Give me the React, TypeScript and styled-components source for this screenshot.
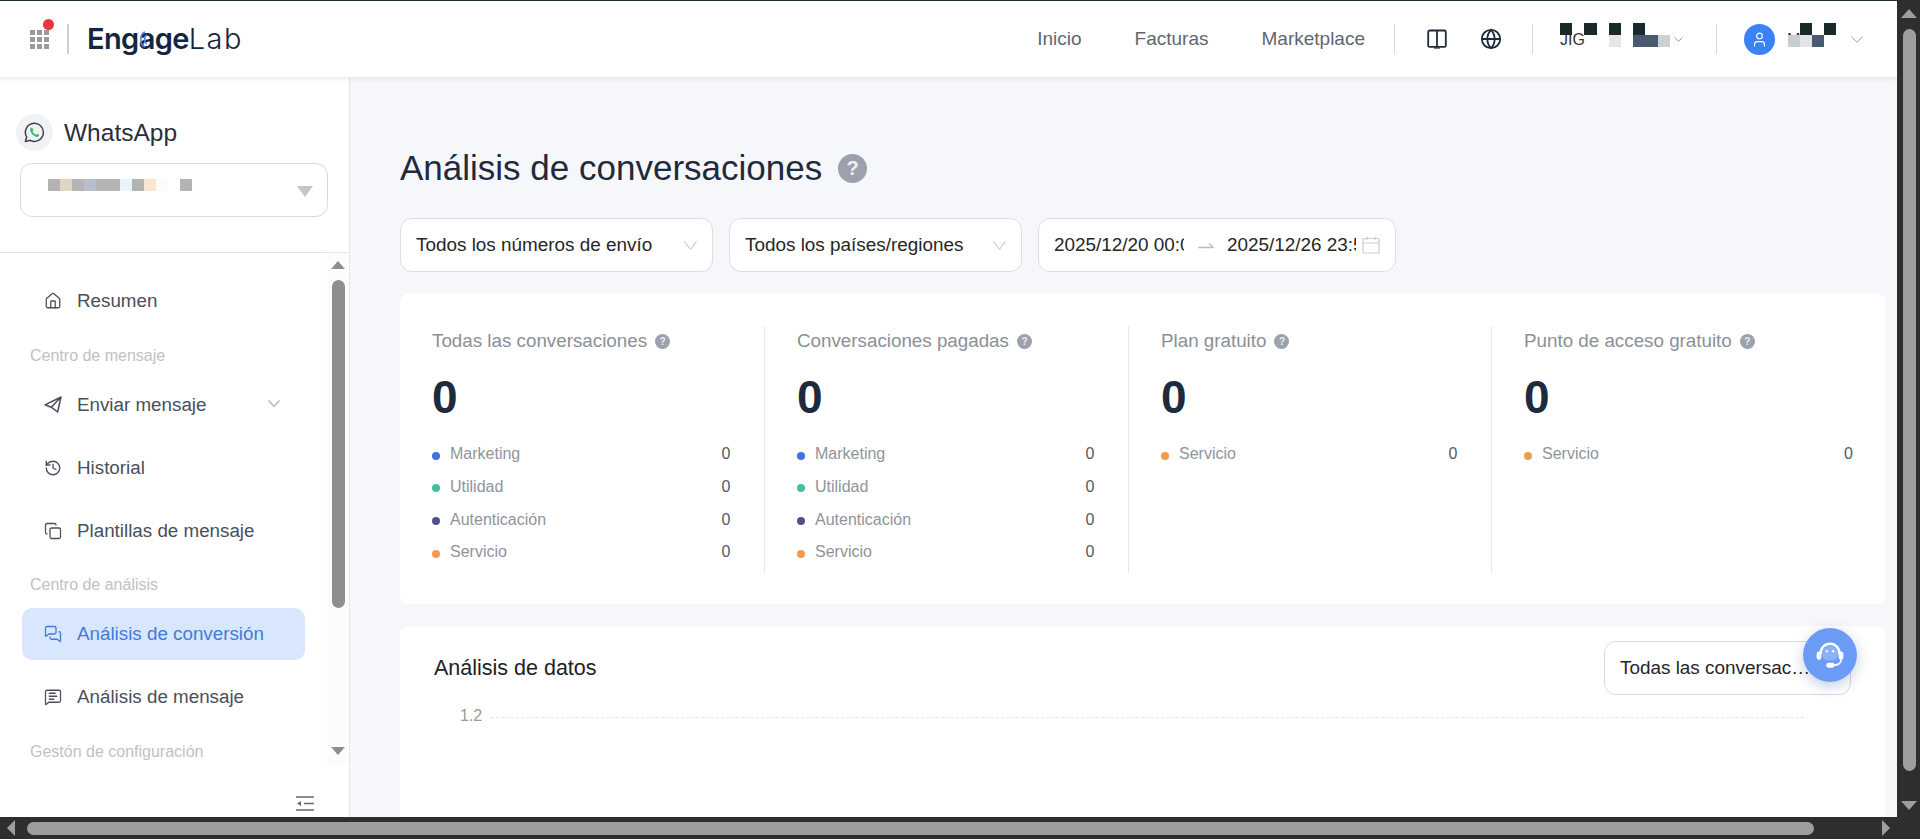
import React from 'react';
import styled, { createGlobalStyle } from 'styled-components';
import { Globe, History, House, Copy, MessagesSquare, MessageSquareText, User } from 'lucide-react';

const GlobalStyle = createGlobalStyle`
  html, body {
    margin: 0;
    height: 100%;
    overflow: hidden;
    font-family: "Liberation Sans", Arial, sans-serif;
    background: #f5f7fa;
  }
  * {
    box-sizing: border-box;
  }
`;

const Screen = styled.div`
  width: 1920px;
  height: 839px;
  display: grid;
  grid-template-columns: 1897px 23px;
  grid-template-rows: 816px 22px;
  overflow: hidden;
  position: relative;
  border-top: 1px solid #1f2f2c;
`;

const Page = styled.div`
  display: flex;
  flex-direction: column;
  height: 816px;
  overflow: hidden;
`;

const TopBar = styled.header`
  height: 76px;
  flex: none;
  display: flex;
  align-items: center;
  padding: 0 34px 0 30px;
  background: #fff;
  box-shadow: 0 1px 6px rgba(30, 40, 60, 0.12);
  position: relative;
  z-index: 2;
`;

const AppGrid = styled.div`
  position: relative;
  display: grid;
  grid-template-columns: repeat(3, 5px);
  grid-auto-rows: 5px;
  gap: 2px;
  margin-top: 1px;
`;

const AppCell = styled.span`
  background: #9b9b9b;
`;

const RedDot = styled.span`
  position: absolute;
  top: -11px;
  right: -5px;
  width: 11px;
  height: 11px;
  border-radius: 50%;
  background: #f0333a;
`;

const LogoDivider = styled.span`
  width: 2px;
  height: 30px;
  margin: 0 18px 0 18px;
  background: #cfcfcf;
`;

const Logo = styled.div`
  position: relative;
  font-family: Inter, sans-serif;
  font-size: 29px;
  letter-spacing: -0.6px;
  color: #12263f;
  display: flex;
  line-height: 30px;
`;

const LogoStrong = styled.span`
  font-weight: 600;
`;

const LogoLight = styled.span`
  font-weight: 300;
  letter-spacing: 1.4px;
`;

const LogoArc = styled.svg`
  position: absolute;
  left: 49px;
  top: 6px;
`;

const Spacer = styled.div`
  flex: 1;
`;

const TopLink = styled.a<{ $gap?: number }>`
  font-size: 19px;
  color: #5f6670;
  margin-right: ${(p) => p.$gap ?? 53}px;
`;

const TopDivider = styled.span<{ $left?: number; $right: number }>`
  width: 1px;
  height: 30px;
  background: #d9dbde;
  margin-left: ${(p) => p.$left ?? 0}px;
  margin-right: ${(p) => p.$right}px;
`;

const TopIcon = styled.span<{ $right: number }>`
  display: flex;
  color: #1e2b3f;
  margin-right: ${(p) => p.$right}px;
`;

const AccountBox = styled.div<{ $width: number }>`
  position: relative;
  width: ${(p) => p.$width}px;
  height: 24px;
  display: flex;
  align-items: center;
  justify-content: flex-end;
  font-size: 16px;
  color: #333;
`;

const AccountText = styled.span`
  position: absolute;
  left: 0;
  top: 4px;
`;

const AccountChevron = styled.span<{ $c: string }>`
  display: flex;
  color: ${(p) => p.$c};
`;

const Mosaic = styled.div<{ $cols: number; $cell: number }>`
  position: absolute;
  display: grid;
  grid-template-columns: repeat(${(p) => p.$cols}, ${(p) => p.$cell}px);
  grid-auto-rows: 12px;
`;

const AccountMosaic = styled(Mosaic)`
  left: 0;
  top: -4px;
`;

const NameMosaic = styled(Mosaic)`
  left: 1px;
  top: -4px;
`;

const Tile = styled.span<{ $c?: string }>`
  background: ${(p) => p.$c || 'transparent'};
`;

const Avatar = styled.span`
  width: 31px;
  height: 31px;
  border-radius: 50%;
  background: #3b82f6;
  display: flex;
  align-items: center;
  justify-content: center;
  color: #fff;
  margin-right: 12px;
`;

const Columns = styled.div`
  flex: 1;
  display: flex;
  min-height: 0;
`;

const Sidebar = styled.aside`
  width: 350px;
  flex: none;
  display: flex;
  flex-direction: column;
  background: #fff;
  border-right: 1px solid #e6e8eb;
`;

const Brand = styled.div`
  height: 176px;
  flex: none;
  padding: 37px 22px 0 16px;
  border-bottom: 1px solid #e3e4e6;
  margin-right: -1px;
`;

const BrandRow = styled.div`
  display: flex;
  align-items: center;
  gap: 11px;
  font-size: 24.5px;
  color: #2a2f3c;
`;

const BrandIcon = styled.span`
  width: 37px;
  height: 37px;
  border-radius: 50%;
  background: #f1f2f4;
  display: flex;
  align-items: center;
  justify-content: center;
`;

const AppSelect = styled.div`
  position: relative;
  height: 54px;
  margin: 12px 0 0 4px;
  border: 1px solid #dadada;
  border-radius: 12px;
`;

const AppMosaic = styled(Mosaic)`
  left: 27px;
  top: 15px;
`;

const AppCaret = styled.span`
  position: absolute;
  right: 14px;
  top: 22px;
  width: 0;
  height: 0;
  border-left: 8px solid transparent;
  border-right: 8px solid transparent;
  border-top: 11px solid #c6c6c6;
`;

const NavArea = styled.div`
  height: 512px;
  flex: none;
  display: flex;
  justify-content: space-between;
  overflow: hidden;
`;

const NavList = styled.nav`
  width: 283px;
  margin-left: 22px;
  padding-top: 22px;
`;

const NavItem = styled.div<{ $active?: boolean }>`
  height: 52px;
  margin-bottom: 11px;
  display: flex;
  align-items: center;
  gap: 15px;
  padding-left: 22px;
  border-radius: 10px;
  font-size: 18.8px;
  color: ${(p) => (p.$active ? '#3f7bdc' : '#4a4f5a')};
  background: ${(p) => (p.$active ? '#d8e7fd' : 'transparent')};
  svg {
    flex: none;
  }
`;

const NavChevron = styled.span`
  display: flex;
  color: #bbbdc1;
  margin: -4px 0 0 auto;
  padding-right: 25px;
`;

const NavGroup = styled.div<{ $tight?: boolean }>`
  height: ${(p) => (p.$tight ? 34 : 35)}px;
  margin-bottom: 6px;
  padding-left: 8px;
  display: flex;
  align-items: center;
  font-size: 16px;
  color: #bfc1c4;
`;

const MiniScroll = styled.div`
  width: 22px;
  background: #fcfcfc;
  display: flex;
  flex-direction: column;
  align-items: center;
  padding: 8px 0 0 0;
`;

const ArrowUp = styled.span<{ $c: string; $w: number }>`
  width: 0;
  height: 0;
  border-left: ${(p) => p.$w}px solid transparent;
  border-right: ${(p) => p.$w}px solid transparent;
  border-bottom: ${(p) => p.$w + 1}px solid ${(p) => p.$c};
`;

const ArrowDown = styled.span<{ $c: string; $w: number }>`
  width: 0;
  height: 0;
  border-left: ${(p) => p.$w}px solid transparent;
  border-right: ${(p) => p.$w}px solid transparent;
  border-top: ${(p) => p.$w + 1}px solid ${(p) => p.$c};
`;

const MiniThumb = styled.span`
  width: 13px;
  height: 328px;
  margin: 11px 0 139px;
  border-radius: 7px;
  background: #8e8e8e;
`;

const CollapseRow = styled.div`
  flex: 1;
  display: flex;
  justify-content: flex-end;
  padding: 31px 35px 0 0;
`;

const Main = styled.main`
  flex: 1;
  min-width: 0;
  padding: 70px 11px 0 50px;
  display: flex;
  flex-direction: column;
  overflow: hidden;
`;

const TitleRow = styled.div`
  height: 42px;
  display: flex;
  align-items: center;
  gap: 16px;
`;

const Title = styled.h1`
  margin: 0;
  font-size: 35px;
  font-weight: 400;
  color: #1f2a3c;
`;

const Help = styled.span<{ $size: number }>`
  width: ${(p) => p.$size}px;
  height: ${(p) => p.$size}px;
  flex: none;
  border-radius: 50%;
  background: #9ca1ad;
  color: #eef0f3;
  display: inline-flex;
  align-items: center;
  justify-content: center;
  font-size: ${(p) => Math.round(p.$size * 0.68)}px;
  font-weight: 700;
`;

const Filters = styled.div`
  display: flex;
  gap: 16px;
  margin-top: 29px;
`;

const Field = styled.div<{ $width: number }>`
  width: ${(p) => p.$width}px;
  height: 54px;
  flex: none;
  background: #fff;
  border: 1px solid #dcdee2;
  border-radius: 12px;
  padding: 0 15px;
  display: flex;
  align-items: center;
  justify-content: space-between;
  font-size: 18.9px;
  color: #262626;
`;

const DateField = styled(Field)`
  justify-content: flex-start;
  gap: 13.5px;
`;

const FieldChevron = styled.span`
  display: flex;
  color: #b9bbbf;
`;

const DateText = styled.span<{ $width: number }>`
  width: ${(p) => p.$width}px;
  flex: none;
  overflow: hidden;
  white-space: nowrap;
`;

const DateIcon = styled.span`
  display: flex;
  margin-left: -8px;
  color: #c9cbcf;
`;

const StatsCard = styled.section`
  height: 310px;
  flex: none;
  margin-top: 22px;
  padding: 32px 33px 0 32px;
  background: #fff;
  border-radius: 8px;
  display: grid;
  grid-template-columns: 331.5px 364px 363px 1fr;
  grid-template-rows: 247px;
`;

const StatCol = styled.div<{ $first?: boolean; $last?: boolean }>`
  padding: 0 ${(p) => (p.$last ? 0 : 33)}px 0 ${(p) => (p.$first ? 0 : 32.5)}px;
  border-left: ${(p) => (p.$first ? 'none' : '1px solid #e8e9eb')};
`;

const StatLabel = styled.div`
  height: 30px;
  display: flex;
  align-items: center;
  gap: 8px;
  font-size: 18.8px;
  color: #8b8f97;
`;

const StatValue = styled.div`
  margin-top: 15px;
  height: 52px;
  display: flex;
  align-items: center;
  font-size: 46px;
  font-weight: 700;
  color: #1e2a3e;
`;

const BreakdownList = styled.div`
  margin-top: 15px;
`;

const BreakdownRow = styled.div`
  height: 32.65px;
  display: flex;
  align-items: center;
  font-size: 16px;
  color: #8f949c;
`;

const Dot = styled.span<{ $c: string }>`
  width: 8px;
  height: 8px;
  border-radius: 50%;
  margin: 3px 10px 0 0;
  background: ${(p) => p.$c};
`;

const BreakdownValue = styled.span`
  margin-left: auto;
  color: #555a62;
`;

const ChartCard = styled.section`
  flex: 1;
  margin-top: 22px;
  background: #fff;
  border-radius: 8px 8px 0 0;
  padding: 15px 35px 0 34px;
`;

const ChartHead = styled.div`
  display: flex;
  align-items: center;
  justify-content: space-between;
`;

const ChartTitle = styled.h2`
  margin: 0;
  font-size: 21.5px;
  font-weight: 400;
  color: #222;
`;

const ChartSelect = styled.div`
  width: 247px;
  height: 54px;
  border: 1px solid #d9d9d9;
  border-radius: 12px;
  padding-left: 15px;
  display: flex;
  align-items: center;
  font-size: 18.9px;
  color: #262626;
  background: #fff;
`;

const ChartAxis = styled.div`
  margin: 12px 47px 0 26px;
  height: 18px;
  display: flex;
  align-items: center;
  gap: 9px;
  font-size: 16px;
  color: #9a9a9a;
`;

const GridLine = styled.span`
  flex: 1;
  margin-top: 3px;
  border-top: 1px dashed #e6e6e6;
`;

const SupportButton = styled.div`
  position: absolute;
  top: 627px;
  left: 1803px;
  width: 54px;
  height: 54px;
  border-radius: 50%;
  background: linear-gradient(135deg, #6a9bf0, #6c9cfb);
  box-shadow: 0 4px 14px rgba(60, 90, 160, 0.3);
  display: flex;
  align-items: center;
  justify-content: center;
  z-index: 3;
`;

const VBar = styled.div`
  background: #2e2e2e;
  display: flex;
  flex-direction: column;
  align-items: center;
  padding: 8px 0 0 1px;
`;

const VThumb = styled.span`
  width: 13px;
  height: 742px;
  margin: 11px 0 30px;
  border-radius: 7px;
  background: #9e9e9e;
`;

const HBar = styled.div`
  grid-column: 1 / 3;
  background: #2e2e2e;
  display: flex;
  align-items: center;
  padding: 0 30px 0 7px;
`;

const HThumb = styled.span`
  width: 1787px;
  height: 13px;
  margin: 0 68px 0 12px;
  border-radius: 7px;
  background: #9e9e9e;
`;

const ArrowLeft = styled.span`
  width: 0;
  height: 0;
  border-top: 8px solid transparent;
  border-bottom: 8px solid transparent;
  border-right: 8px solid #9e9e9e;
`;

const ArrowRight = styled.span`
  width: 0;
  height: 0;
  border-top: 8px solid transparent;
  border-bottom: 8px solid transparent;
  border-left: 8px solid #9e9e9e;
`;

const DOT = {
  marketing: '#3e74e0',
  utility: '#45bfa0',
  auth: '#50508f',
  service: '#f29b4a',
};

const fullRows = [
  { label: 'Marketing', color: DOT.marketing },
  { label: 'Utilidad', color: DOT.utility },
  { label: 'Autenticación', color: DOT.auth },
  { label: 'Servicio', color: DOT.service },
];
const serviceRow = [{ label: 'Servicio', color: DOT.service }];

const stats = [
  { title: 'Todas las conversaciones', rows: fullRows },
  { title: 'Conversaciones pagadas', rows: fullRows },
  { title: 'Plan gratuito', rows: serviceRow },
  { title: 'Punto de acceso gratuito', rows: serviceRow },
];

// redaction blocks that sit over the account names in the screenshot
const K = '#1a2a2a';
const B = '#4a5a70';
const accountTiles = [K, '', K, '', K, '', K, '', '', '', '', '', '', '#e4e6e8', '', B, B, '#ccd0d4'];
const nameTiles = ['', K, '', K, '#c9ced3', '#e2e4e6', B, ''];
const appTiles = [
  '#b3b3b3', '#e2d4c4', '#b5b5b5', '#b8bfca', '#b4b4b4', '#b4b4b4', '#eaf4f8', '#b3b3b3', '#f9e6cf', '#fbfbfb', '', '#b3b3b3',
];

const VChevron = ({ w, h, width = 1 }: { w: number; h: number; width?: number }) => (
  <svg width={w} height={h} viewBox={`0 0 ${w} ${h}`} fill="none" stroke="currentColor" strokeWidth={width}>
    <path d={`M0.5 0.5 ${w / 2} ${h - 0.7} ${w - 0.5} 0.5`} />
  </svg>
);

const BookIcon = () => (
  <svg width="20" height="20" viewBox="0 0 20 20" fill="none" stroke="currentColor" strokeWidth="1.8">
    <rect x="1.2" y="1.5" width="17.6" height="16.4" rx="1.5" />
    <path d="M10 1.5v16.4" />
    <path d="M7 19h6" strokeWidth="1.2" />
  </svg>
);

const PlaneIcon = () => (
  <svg width="18" height="18" viewBox="0 0 18 18" fill="none" stroke="currentColor" strokeWidth="1.5" strokeLinejoin="round" strokeLinecap="round">
    <path d="M17 1 1 8.8l6.2 2.4Zl-3.4 15-6.4-4.8" />
  </svg>
);

const WhatsAppIcon = () => (
  <svg width="21" height="21" viewBox="0 0 21 21" fill="none">
    <path d="M1.4 19.6 2.7 15A9 9 0 1 1 6.2 18.3Z" stroke="#39424e" strokeWidth="1.5" strokeLinejoin="round" />
    <path
      d="M7.4 5.6c-.9.5-1.5 1.6-1.2 3 .6 2.8 3.4 5.7 6.2 6.3 1.3.2 2.3-.3 2.9-1.3l-.2-.9-2.2-1-1 1c-1.5-.5-2.8-1.9-3.4-3.4l1-1-1-2.3Z"
      fill="#34c263"
    />
  </svg>
);

const CollapseIcon = () => (
  <svg width="18" height="15" viewBox="0 0 18 15" fill="none" stroke="#666a70" strokeWidth="1.4">
    <path d="M0 1h18M0 14h18M8 7.5h10" />
    <path d="M1 7.5 5 5v5Z" fill="#666a70" stroke="none" />
  </svg>
);

const RangeArrow = () => (
  <svg width="16" height="8" viewBox="0 0 16 8" fill="none" stroke="currentColor" strokeWidth="1.3">
    <path d="M0 6.5h15L11 2.5" />
  </svg>
);

const CalendarIcon = () => (
  <svg width="18" height="18" viewBox="0 0 18 18" fill="none" stroke="currentColor" strokeWidth="1.2">
    <rect x="1" y="2.5" width="16" height="14.5" rx="1" />
    <path d="M1 7h16M5 0.5v3.5M13 0.5v3.5" />
  </svg>
);

const HeadsetIcon = () => (
  <svg width="34" height="34" viewBox="0 0 32 32" fill="none">
    <path d="M7 15.5C7 9.5 10.6 5.5 16 5.5s9 4 9 10" stroke="#fff" strokeWidth="2.4" />
    <path d="M8.6 15c0-4.5 3.2-7.5 7.4-7.5s7.4 3 7.4 7.5c0 4-2.6 6.2-7.4 6.2S8.6 19 8.6 15Z" fill="#fff" fillOpacity="0.22" />
    <rect x="3.4" y="12.6" width="4.4" height="8" rx="2.2" fill="#fff" />
    <rect x="24.2" y="12.6" width="4.4" height="8" rx="2.2" fill="#fff" />
    <circle cx="13" cy="12.5" r="1.1" fill="#fff" />
    <circle cx="19" cy="12.5" r="1.1" fill="#fff" />
    <path d="M26.4 20.5c0 3.2-3 5-6.4 5" stroke="#fff" strokeWidth="1.8" />
    <rect x="12.4" y="23.4" width="8" height="4.6" rx="2.3" fill="#fff" />
  </svg>
);

export default function App() {
  return (
    <>
      <GlobalStyle />
      <Screen>
        <Page>
          <TopBar>
            <AppGrid>
              {Array.from({ length: 9 }).map((_, i) => (
                <AppCell key={i} />
              ))}
              <RedDot />
            </AppGrid>
            <LogoDivider />
            <Logo>
              <LogoStrong>Engage</LogoStrong>
              <LogoLight>Lab</LogoLight>
              <LogoArc width="16" height="20" viewBox="0 0 16 20" fill="none" stroke="#4a86e8" strokeWidth="1.6">
                <path d="M9 2C4 3 3 15 9 17" />
                <path d="M11 5C8 6 7.5 12 11 14" />
              </LogoArc>
            </Logo>
            <Spacer />
            <TopLink>Inicio</TopLink>
            <TopLink>Facturas</TopLink>
            <TopLink $gap={29}>Marketplace</TopLink>
            <TopDivider $right={32} />
            <TopIcon $right={33}>
              <BookIcon />
            </TopIcon>
            <TopIcon $right={30}>
              <Globe size={22} strokeWidth={2} />
            </TopIcon>
            <TopDivider $right={27} />
            <AccountBox $width={123}>
              <AccountText>JIG</AccountText>
              <AccountMosaic $cols={9} $cell={12.2}>
                {accountTiles.map((c, i) => (
                  <Tile key={i} $c={c} />
                ))}
              </AccountMosaic>
              <AccountChevron $c="#98999b">
                <VChevron w={9} h={5} />
              </AccountChevron>
            </AccountBox>
            <TopDivider $left={33} $right={27} />
            <Avatar>
              <User size={17} strokeWidth={1.6} />
            </Avatar>
            <AccountBox $width={76}>
              <AccountText>M</AccountText>
              <NameMosaic $cols={4} $cell={12}>
                {nameTiles.map((c, i) => (
                  <Tile key={i} $c={c} />
                ))}
              </NameMosaic>
              <AccountChevron $c="#a2a5aa">
                <VChevron w={12} h={7} />
              </AccountChevron>
            </AccountBox>
          </TopBar>
          <Columns>
            <Sidebar>
              <Brand>
                <BrandRow>
                  <BrandIcon>
                    <WhatsAppIcon />
                  </BrandIcon>
                  WhatsApp
                </BrandRow>
                <AppSelect>
                  <AppMosaic $cols={12} $cell={12}>
                    {appTiles.map((c, i) => (
                      <Tile key={i} $c={c} />
                    ))}
                  </AppMosaic>
                  <AppCaret />
                </AppSelect>
              </Brand>
              <NavArea>
                <NavList>
                  <NavItem>
                    <House size={18} strokeWidth={1.7} />
                    Resumen
                  </NavItem>
                  <NavGroup>Centro de mensaje</NavGroup>
                  <NavItem>
                    <PlaneIcon />
                    Enviar mensaje
                    <NavChevron>
                      <VChevron w={12} h={7} width={1.6} />
                    </NavChevron>
                  </NavItem>
                  <NavItem>
                    <History size={18} strokeWidth={1.8} />
                    Historial
                  </NavItem>
                  <NavItem>
                    <Copy size={18} strokeWidth={1.7} />
                    Plantillas de mensaje
                  </NavItem>
                  <NavGroup $tight>Centro de análisis</NavGroup>
                  <NavItem $active>
                    <MessagesSquare size={18} strokeWidth={1.7} />
                    Análisis de conversión
                  </NavItem>
                  <NavItem>
                    <MessageSquareText size={18} strokeWidth={1.7} />
                    Análisis de mensaje
                  </NavItem>
                  <NavGroup>Gestón de configuración</NavGroup>
                </NavList>
                <MiniScroll>
                  <ArrowUp $c="#8e8e8e" $w={7} />
                  <MiniThumb />
                  <ArrowDown $c="#8e8e8e" $w={7} />
                </MiniScroll>
              </NavArea>
              <CollapseRow>
                <CollapseIcon />
              </CollapseRow>
            </Sidebar>
            <Main>
              <TitleRow>
                <Title>Análisis de conversaciones</Title>
                <Help $size={29}>?</Help>
              </TitleRow>
              <Filters>
                <Field $width={313}>
                  Todos los números de envío
                  <FieldChevron>
                    <VChevron w={13} h={9} />
                  </FieldChevron>
                </Field>
                <Field $width={293}>
                  Todos los países/regiones
                  <FieldChevron>
                    <VChevron w={13} h={9} />
                  </FieldChevron>
                </Field>
                <DateField $width={358}>
                  <DateText $width={130}>2025/12/20 00:00</DateText>
                  <FieldChevron>
                    <RangeArrow />
                  </FieldChevron>
                  <DateText $width={129}>2025/12/26 23:59</DateText>
                  <DateIcon>
                    <CalendarIcon />
                  </DateIcon>
                </DateField>
              </Filters>
              <StatsCard>
                {stats.map((s, i) => (
                  <StatCol key={s.title} $first={i === 0} $last={i === 3}>
                    <StatLabel>
                      {s.title}
                      <Help $size={15}>?</Help>
                    </StatLabel>
                    <StatValue>0</StatValue>
                    <BreakdownList>
                      {s.rows.map((r) => (
                        <BreakdownRow key={r.label}>
                          <Dot $c={r.color} />
                          {r.label}
                          <BreakdownValue>0</BreakdownValue>
                        </BreakdownRow>
                      ))}
                    </BreakdownList>
                  </StatCol>
                ))}
              </StatsCard>
              <ChartCard>
                <ChartHead>
                  <ChartTitle>Análisis de datos</ChartTitle>
                  <ChartSelect>Todas las conversac…</ChartSelect>
                </ChartHead>
                <ChartAxis>
                  1.2
                  <GridLine />
                </ChartAxis>
              </ChartCard>
            </Main>
          </Columns>
        </Page>
        <VBar>
          <ArrowUp $c="#9e9e9e" $w={8} />
          <VThumb />
          <ArrowDown $c="#9e9e9e" $w={8} />
        </VBar>
        <HBar>
          <ArrowLeft />
          <HThumb />
          <ArrowRight />
        </HBar>
        <SupportButton>
          <HeadsetIcon />
        </SupportButton>
      </Screen>
    </>
  );
}
